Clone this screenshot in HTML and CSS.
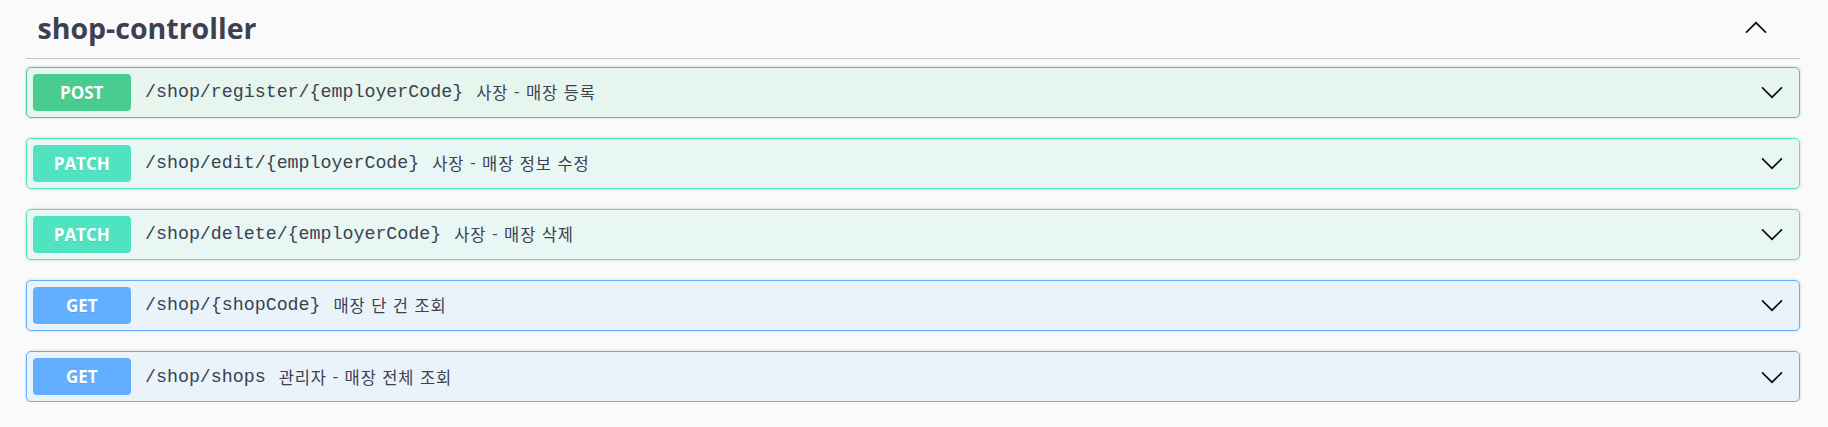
FILE: index.html
```html
<!DOCTYPE html>
<html lang="ko">
<head>
<meta charset="utf-8">
<title>shop-controller</title>
<link rel="stylesheet" href="styles.css">
</head>
<body>
<div class="wrapper">
  <section class="tag-section">
    <h3 class="tag-title">
      <span class="tag-name">shop-controller</span>
      <button class="tag-toggle" aria-label="collapse">
        <svg class="arrow up" viewBox="0 0 20 20" width="24" height="24"><path d="M17.418 6.109c.272-.268.709-.268.979 0s.271.701 0 .969l-7.908 7.83c-.27.268-.707.268-.979 0l-7.908-7.83c-.27-.268-.27-.701 0-.969.271-.268.709-.268.979 0L10 13.25l7.418-7.141z"/></svg>
      </button>
    </h3>
    <div class="ops">
      <div class="op op-post">
        <span class="method">POST</span>
        <span class="path">/shop/register/{employerCode}</span>
        <span class="desc">사장 - 매장 등록</span>
        <svg class="arrow" viewBox="0 0 20 20" width="24" height="24"><path d="M17.418 6.109c.272-.268.709-.268.979 0s.271.701 0 .969l-7.908 7.83c-.27.268-.707.268-.979 0l-7.908-7.830c-.27-.268-.27-.701 0-.969.271-.268.709-.268.979 0L10 13.25l7.418-7.141z"/></svg>
      </div>
      <div class="op op-patch">
        <span class="method">PATCH</span>
        <span class="path">/shop/edit/{employerCode}</span>
        <span class="desc">사장 - 매장 정보 수정</span>
        <svg class="arrow" viewBox="0 0 20 20" width="24" height="24"><path d="M17.418 6.109c.272-.268.709-.268.979 0s.271.701 0 .969l-7.908 7.83c-.27.268-.707.268-.979 0l-7.908-7.83c-.27-.268-.27-.701 0-.969.271-.268.709-.268.979 0L10 13.25l7.418-7.141z"/></svg>
      </div>
      <div class="op op-patch">
        <span class="method">PATCH</span>
        <span class="path">/shop/delete/{employerCode}</span>
        <span class="desc">사장 - 매장 삭제</span>
        <svg class="arrow" viewBox="0 0 20 20" width="24" height="24"><path d="M17.418 6.109c.272-.268.709-.268.979 0s.271.701 0 .969l-7.908 7.83c-.27.268-.707.268-.979 0l-7.908-7.83c-.27-.268-.27-.701 0-.969.271-.268.709-.268.979 0L10 13.25l7.418-7.141z"/></svg>
      </div>
      <div class="op op-get">
        <span class="method">GET</span>
        <span class="path">/shop/{shopCode}</span>
        <span class="desc">매장 단 건 조회</span>
        <svg class="arrow" viewBox="0 0 20 20" width="24" height="24"><path d="M17.418 6.109c.272-.268.709-.268.979 0s.271.701 0 .969l-7.908 7.83c-.27.268-.707.268-.979 0l-7.908-7.83c-.27-.268-.27-.701 0-.969.271-.268.709-.268.979 0L10 13.25l7.418-7.141z"/></svg>
      </div>
      <div class="op op-get">
        <span class="method">GET</span>
        <span class="path">/shop/shops</span>
        <span class="desc">관리자 - 매장 전체 조회</span>
        <svg class="arrow" viewBox="0 0 20 20" width="24" height="24"><path d="M17.418 6.109c.272-.268.709-.268.979 0s.271.701 0 .969l-7.908 7.83c-.27.268-.707.268-.979 0l-7.908-7.83c-.27-.268-.27-.701 0-.969.271-.268.709-.268.979 0L10 13.25l7.418-7.141z"/></svg>
      </div>
    </div>
  </section>
</div>
</body>
</html>
```

FILE: styles.css
```css
html, body {
  margin: 0;
  padding: 0;
  background: #fafafa;
}

body {
  font-family: "Open Sans", "Noto Sans CJK KR", sans-serif;
  color: #3b4151;
}

.wrapper {
  padding: 0 28px 0 25.5px;
}

.tag-title {
  display: flex;
  align-items: center;
  margin: 0;
  padding: 8px 24px 10px 12px;
  border-bottom: 1px solid rgba(59, 65, 81, 0.3);
  font-size: 28.5px;
  line-height: 40px;
  font-weight: 700;
  color: #3b4151;
}

.tag-name {
  flex: 1 1 auto;
}

.tag-toggle {
  display: flex;
  border: 0;
  background: none;
  padding: 0;
  margin-right: 8px;
}

.arrow {
  display: block;
  fill: #111;
  flex: 0 0 auto;
}

.arrow.up {
  transform: rotate(180deg);
}

.ops {
  display: flex;
  flex-direction: column;
  gap: 19.7px;
  padding-top: 7.5px;
}

.op {
  display: flex;
  align-items: center;
  padding: 6px;
  border: 1px solid;
  border-radius: 5px;
  box-shadow: 0 0 3px rgba(0, 0, 0, 0.19);
}

.method {
  display: flex;
  align-items: center;
  justify-content: center;
  min-width: 98.5px;
  height: 37.4px;
  border-radius: 4px;
  color: #fff;
  font-family: "Open Sans", sans-serif;
  font-size: 17px;
  font-weight: 700;
  text-shadow: 0 1px 0 rgba(0, 0, 0, 0.1);
}

.path {
  padding-left: 14px;
  font-family: "Liberation Mono", "Noto Sans CJK KR", monospace;
  font-size: 18.3px;
  color: #3b4151;
}

.desc {
  flex: 1 1 auto;
  padding-left: 13px;
  font-family: "Noto Sans CJK KR", sans-serif;
  font-size: 16.5px;
  letter-spacing: 0.9px;
  color: #3b4151;
}

.op .arrow {
  margin-right: 9px;
}

.op-post {
  border-color: #49cc90;
  background: rgba(73, 204, 144, 0.1);
}
.op-post .method { background: #49cc90; }

.op-patch {
  border-color: #50e3c2;
  background: rgba(80, 227, 194, 0.1);
}
.op-patch .method { background: #50e3c2; }

.op-get {
  border-color: #61affe;
  background: rgba(97, 175, 254, 0.1);
}
.op-get .method { background: #61affe; }
```
